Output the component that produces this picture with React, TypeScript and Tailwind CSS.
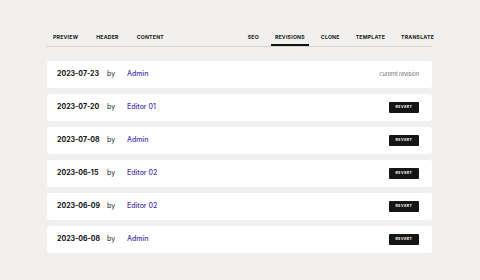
const leftTabs = ['Preview', 'Header', 'Content'];
const rightTabs = ['SEO', 'Revisions', 'Clone', 'Template', 'Translate'];

const revisions = [
  { date: '2023-07-23', author: 'Admin', current: true },
  { date: '2023-07-20', author: 'Editor 01' },
  { date: '2023-07-08', author: 'Admin' },
  { date: '2023-06-15', author: 'Editor 02' },
  { date: '2023-06-09', author: 'Editor 02' },
  { date: '2023-06-08', author: 'Admin' },
];

function Tab({ label, active }: { label: string; active?: boolean }) {
  return (
    <div
      className={
        'h-[14px] px-[4px] flex items-center text-[5.2px] font-bold uppercase tracking-[0.04em] text-[#1a1a1a] border-b-2 ' +
        (active ? 'border-[#111]' : 'border-transparent')
      }
    >
      {label}
    </div>
  );
}

export default function App() {
  return (
    <div
      className="w-[480px] h-[280px] bg-[#f1f0ee] pt-[32px] pl-[47px] pr-[48px]"
      style={{ fontFamily: 'Inter, "Liberation Sans", sans-serif' }}
    >
      {/* Tabs */}
      <div className="flex items-end justify-between border-b border-[#d6d5d2] -ml-[1px]">
        <div className="flex gap-[10px] pl-[3px]">
          {leftTabs.map((t) => (
            <Tab key={t} label={t} />
          ))}
        </div>
        <div className="flex gap-[8px] -mr-[6px]">
          {rightTabs.map((t) => (
            <Tab key={t} label={t} active={t === 'Revisions'} />
          ))}
        </div>
      </div>

      {/* Revisions list */}
      <div className="mt-[14px] flex flex-col gap-[6px]">
        {revisions.map((r) => (
          <div
            key={r.date}
            className="h-[27px] bg-white rounded-[3px] flex items-center pl-[10px] pr-[13px] text-[7px]"
          >
            <span className="w-[50px] font-bold text-[#111]">{r.date}</span>
            <span className="w-[20px] text-[#222]">by</span>
            <span className="font-medium text-[#4636a8]">{r.author}</span>
            <div className="flex-1" />
            {r.current ? (
              <span className="italic font-light text-[5.5px] text-[#333]">current revision</span>
            ) : (
              <button className="w-[30px] h-[11px] bg-[#151515] rounded-[1px] text-white text-[3.5px] font-bold tracking-[0.15em] uppercase flex items-center justify-center">
                Revert
              </button>
            )}
          </div>
        ))}
      </div>
    </div>
  );
}
